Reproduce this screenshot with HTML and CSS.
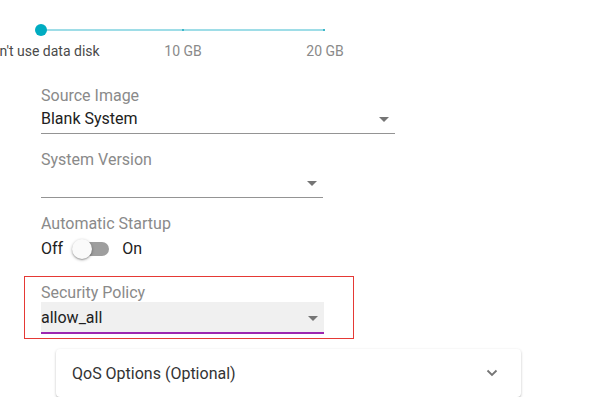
FILE: index.html
```html
<!DOCTYPE html>
<html>
<head>
<meta charset="utf-8">
<link rel="stylesheet" href="styles.css">
</head>
<body>
<div class="form">
  <div class="slider">
    <div class="track"></div>
    <div class="tick tick-mid"></div>
    <div class="tick tick-end"></div>
    <div class="thumb"></div>
    <span class="mark mark-start">Don't use data disk</span>
    <span class="mark mark-mid">10 GB</span>
    <span class="mark mark-end">20 GB</span>
  </div>

  <div class="field">
    <div class="label">Source Image</div>
    <div class="select select-wide">
      <span class="value">Blank System</span>
      <span class="caret"></span>
    </div>
  </div>

  <div class="field">
    <div class="label">System Version</div>
    <div class="select">
      <span class="value"></span>
      <span class="caret"></span>
    </div>
  </div>

  <div class="field">
    <div class="label">Automatic Startup</div>
    <div class="switch-row">
      <span class="switch-text">Off</span>
      <span class="switch">
        <span class="switch-track"></span>
        <span class="switch-thumb"></span>
      </span>
      <span class="switch-text">On</span>
    </div>
  </div>

  <div class="highlight">
    <div class="label">Security Policy</div>
    <div class="select select-filled">
      <span class="value">allow_all</span>
      <span class="caret"></span>
    </div>
  </div>

  <div class="card">
    <span class="card-title">QoS Options (Optional)</span>
    <svg class="chevron" width="12" height="8" viewBox="0 0 12 8"><polyline points="1.5,1.5 6,6 10.5,1.5" fill="none" stroke="#757575" stroke-width="1.8"/></svg>
  </div>
</div>
</body>
</html>
```

FILE: styles.css
```css
html, body {
  margin: 0;
  padding: 0;
  background: #ffffff;
  overflow: hidden;
}

body {
  font-family: Roboto, "Liberation Sans", sans-serif;
  color: #212121;
}

.form {
  display: flex;
  flex-direction: column;
  align-items: flex-start;
  padding-left: 41px;
}

/* slider */
.slider {
  position: relative;
  width: 284px;
  height: 84px;
}

.track {
  position: absolute;
  left: 0;
  right: 0;
  top: 29px;
  height: 2px;
  background: #9edde7;
}

.tick {
  position: absolute;
  top: 29px;
  width: 2px;
  height: 2px;
  background: #3fb8c9;
}

.tick-mid { left: 141px; }
.tick-end { left: 282px; }

.thumb {
  position: absolute;
  left: -6px;
  top: 24px;
  width: 12px;
  height: 12px;
  border-radius: 50%;
  background: #00acc1;
}

.mark {
  position: absolute;
  top: 43px;
  font-size: 14px;
  line-height: 16px;
  white-space: nowrap;
  color: #8a8a8a;
  transform: translateX(-50%);
}

.mark-start { left: 0; color: #4a4a4a; }
.mark-mid { left: 50%; }
.mark-end { left: 100%; }

/* fields */
.field {
  display: flex;
  flex-direction: column;
  margin-bottom: 14px;
}

.label {
  font-size: 16px;
  line-height: 24px;
  color: #8a8a8a;
  margin-bottom: -2px;
}

.select {
  display: flex;
  align-items: center;
  justify-content: space-between;
  width: 276px;
  height: 22px;
  padding: 2px 6px 3px 0;
  border-bottom: 1px solid #949494;
}

.select-wide {
  width: 348px;
}

.value {
  font-size: 16px;
  line-height: 22px;
  color: #212121;
}

.caret {
  width: 0;
  height: 0;
  margin-top: 1px;
  border-left: 5px solid transparent;
  border-right: 5px solid transparent;
  border-top: 5px solid #757575;
}

/* switch */
.switch-row {
  display: flex;
  align-items: center;
  height: 32px;
  margin-top: -1px;
}

.switch-text {
  font-size: 16px;
  line-height: 32px;
  color: #212121;
}

.switch {
  position: relative;
  width: 37px;
  height: 20px;
  margin: 0 13px 0 9px;
}

.switch-track {
  position: absolute;
  left: 3px;
  top: 3px;
  width: 34px;
  height: 14px;
  border-radius: 7px;
  background: #9e9e9e;
}

.switch-thumb {
  position: absolute;
  left: 0;
  top: 0;
  width: 20px;
  height: 20px;
  border-radius: 50%;
  background: #fafafa;
  box-shadow: 0 1px 3px rgba(0, 0, 0, 0.35), 0 1px 1px rgba(0, 0, 0, 0.14);
}

/* highlighted security policy */
.highlight {
  margin: -3px 0 0 -17px;
  padding: 4px 29px 4px 16px;
  border: 1px solid #e53935;
}

.highlight .label {
  margin-bottom: -3px;
}

.select-filled {
  width: 277px;
  height: 28px;
  padding: 2px 6px 0 0;
  background: #f0f0f0;
  border-bottom: 2px solid #9c27b0;
}

.select-filled .value {
  line-height: 28px;
}

.select-filled .caret {
  margin-top: 0;
}

/* card */
.card {
  display: flex;
  align-items: center;
  justify-content: space-between;
  box-sizing: border-box;
  width: 465px;
  height: 48px;
  margin: 10px 0 0 15px;
  padding: 0 23px 0 16px;
  background: #ffffff;
  border-radius: 4px;
  box-shadow: 0 1px 3px rgba(0, 0, 0, 0.2), 0 1px 1px rgba(0, 0, 0, 0.12);
}

.card-title {
  font-size: 16px;
  color: #333333;
}

.chevron {
  display: block;
}
```
